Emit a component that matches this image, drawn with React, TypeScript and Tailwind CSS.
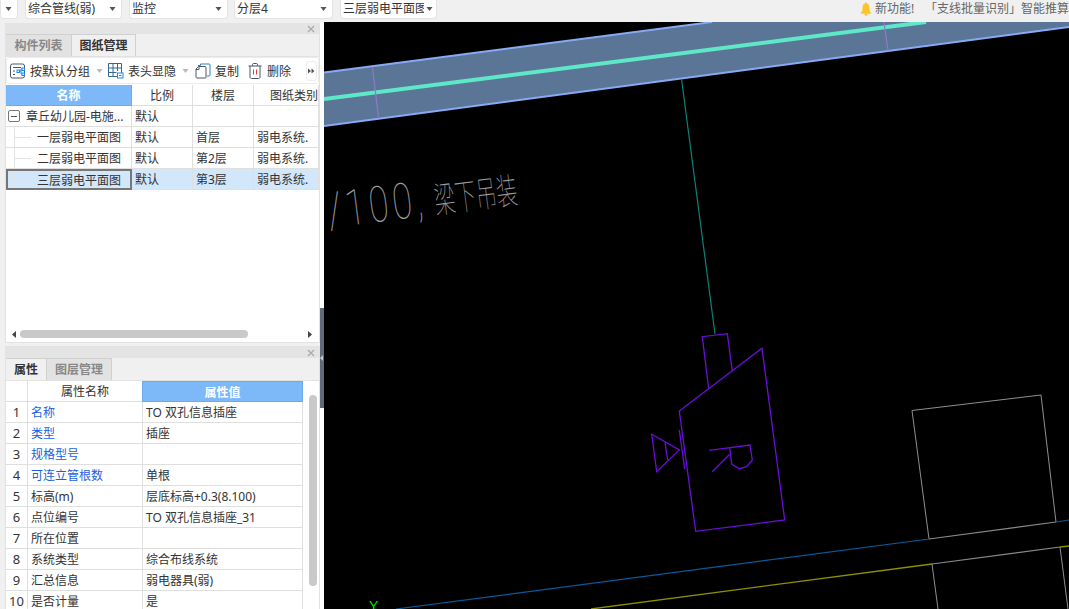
const FONT = 'font-["Noto_Sans","Noto_Sans_CJK_SC",sans-serif]';

function Caret({ className = "" }: { className?: string }) {
  return (
    <svg width="7" height="4" viewBox="0 0 7 4" className={`shrink-0 ${className}`}>
      <path d="M0.5 0h6L3.5 4z" fill="#555" />
    </svg>
  );
}

function Drop({ w, ml, label, tight }: { w: string; ml?: string; label?: string; tight?: boolean }) {
  return (
    <div className={`${w} ${ml ?? ""} h-[19px] bg-white rounded-b-[4px] border-b border-x border-[#e4e4e4] flex items-center pl-[2px] ${tight ? "pr-[3px]" : "pr-[5px]"} text-[12px] text-[#333] overflow-hidden shrink-0`}>
      <span className="flex-1 min-w-0 whitespace-nowrap overflow-hidden">{label}</span>
      <Caret className={tight ? "ml-[2px]" : ""} />
    </div>
  );
}

function TopBar() {
  return (
    <div className="h-[22px] shrink-0 bg-[#f0f0f0] flex items-start overflow-hidden">
      <Drop w="w-[18px]" />
      <Drop w="w-[97px]" ml="ml-[7px]" label="综合管线(弱)" />
      <Drop w="w-[99px]" ml="ml-[7px]" label="监控" />
      <Drop w="w-[99px]" ml="ml-[6px]" label="分层4" />
      <Drop w="w-[97px]" ml="ml-[7px]" label="三层弱电平面图" tight />
      <div className="flex-1" />
      <div className="w-[209px] shrink-0 flex items-center h-[17px] text-[12px] text-[#666] whitespace-nowrap overflow-hidden">
        <svg width="12" height="14" viewBox="0 0 14 16" className="shrink-0 mr-[3px]">
          <path d="M7 0.5c.8 0 1.2.6 1.2 1.2C10.5 2.4 11 4.500 11 7c0 2.800 1 4.400 2 5.500v1H1v-1C2 11.400 3 9.800 3 7c0-2.500.5-4.600 2.800-5.300C5.800 1.100 6.200.5 7 .5z" fill="#fcc32c" />
          <ellipse cx="7" cy="14.500" rx="2" ry="1.300" fill="#fcc32c" />
        </svg>
        <span className="w-[50px] shrink-0">新功能!</span>
        <span>「支线批量识别」智能推算</span>
      </div>
    </div>
  );
}

function CloseBar() {
  return (
    <div className="h-[11px] bg-[#e4e4e4] flex items-center justify-end pr-[4px] shrink-0">
      <svg width="8" height="8" viewBox="0 0 8 8">
        <path d="M1 1l6 6M7 1L1 7" stroke="#a8a8a8" strokeWidth="1.200" />
      </svg>
    </div>
  );
}

function Tabs({ items }: { items: { label: string; w: string; active?: boolean }[] }) {
  return (
    <div className="h-[23px] bg-[#f0f0f0] flex border-b border-[#e2e2e2] shrink-0">
      {items.map((t) => (
        <div
          key={t.label}
          className={`${t.w} flex items-center justify-center text-[12px] border-r border-t border-[#d0d0d0] ${
            t.active ? "bg-[#f0f0f0] text-[#333] font-bold" : "bg-[#e2e2e2] text-[#888] font-bold"
          }`}
        >
          {t.label}
        </div>
      ))}
    </div>
  );
}

function GroupIcon() {
  return (
    <svg width="16" height="16" viewBox="0 0 16 16" className="shrink-0">
      <rect x="0.500" y="1" width="14" height="14" rx="2" fill="none" stroke="#4a5568" />
      <path d="M3 4.500h8M3 11.500h2M3 8h2" stroke="#4a5568" />
      <rect x="7" y="7" width="2.500" height="2.500" fill="none" stroke="#1e88e5" />
      <rect x="12" y="5" width="2.500" height="2.500" fill="#fff" stroke="#1e88e5" />
      <rect x="12" y="10" width="2.500" height="2.500" fill="#fff" stroke="#1e88e5" />
      <path d="M9.500 8H11V6h1M11 8v3h1" fill="none" stroke="#1e88e5" />
    </svg>
  );
}

function TableIcon() {
  return (
    <svg width="16" height="16" viewBox="0 0 16 16" className="shrink-0">
      <path d="M.5.500h13v13H.5zM.5 5h13M.5 9.500h8M5 .500v13M9.500.500V8" fill="none" stroke="#33669c" />
      <rect x="9.500" y="10" width="5.500" height="5" fill="#fff" stroke="#1e88e5" />
      <path d="M11 12.500h2.500" stroke="#1e88e5" />
    </svg>
  );
}

function CopyIcon() {
  return (
    <svg width="16" height="16" viewBox="0 0 16 16" className="shrink-0">
      <path d="M3 2.500h2.500V1h8.500c.6 0 1 .4 1 1v10c0 .6-.4 1-1 1h-2" fill="none" stroke="#2f7fc4" />
      <path d="M3.500 3.500H10c.6 0 1 .4 1 1v10c0 .3-.2.500-.5.500H2c-.6 0-1-.4-1-1V6z" fill="#fff" stroke="#4a5568" />
      <path d="M4 3.500V6.500H1" fill="none" stroke="#4a5568" />
    </svg>
  );
}

function TrashIcon() {
  return (
    <svg width="14" height="16" viewBox="0 0 14 16" className="shrink-0">
      <path d="M.5 3h13M4.500 3V1.500c0-.5.4-1 1-1h3c.6 0 1 .5 1 1V3" fill="none" stroke="#4a5568" />
      <path d="M2 3v11c0 .8.600 1.500 1.500 1.500h7c.9 0 1.500-.7 1.500-1.500V3" fill="none" stroke="#4a5568" />
      <path d="M5.500 6.500v5M8.500 6.500v5" stroke="#e53935" />
    </svg>
  );
}

function Toolbar() {
  return (
    <div className="h-[27px] bg-white rounded-[3px] border border-[#ececec] flex items-center pl-[3px] text-[12px] text-[#333] whitespace-nowrap shrink-0">
      <GroupIcon />
      <span className="ml-[4px] pt-[2px]">按默认分组</span>
      <Caret className="ml-[6px] opacity-40" />
      <span className="ml-[5px] flex"><TableIcon /></span>
      <span className="ml-[4px] pt-[2px]">表头显隐</span>
      <Caret className="ml-[6px] opacity-40" />
      <span className="ml-[6px] flex"><CopyIcon /></span>
      <span className="ml-[4px] pt-[2px]">复制</span>
      <span className="ml-[9px] flex"><TrashIcon /></span>
      <span className="ml-[5px] pt-[2px]">删除</span>
      <div className="ml-[15px] w-[11px] h-[20px] border border-[#ececec] rounded-[3px] flex items-center justify-center">
        <svg width="7" height="6" viewBox="0 0 7 6">
          <path d="M0 .5l3 2.500L0 5.500zM3.500 .5l3 2.500-3 2.500z" fill="#555" />
        </svg>
      </div>
    </div>
  );
}

const cell = "h-[21px] border-r border-b border-[#dfdfdf] flex items-center px-[3px] pt-[2px] whitespace-nowrap overflow-hidden";

function TreeName({ label, selected }: { label: string; selected?: boolean }) {
  return (
    <div className={`h-[21px] flex items-center whitespace-nowrap overflow-hidden ${selected ? "border-2 border-[#767676]" : "border-r border-b border-[#dfdfdf]"}`}>
      <div className={`${selected ? "ml-[6px]" : "ml-[8px]"} h-full w-[23px] shrink-0 border-l border-[#e4e4e4] flex items-center`}>
        <div className="w-[16px] h-px bg-[#e4e4e4]" />
      </div>
      <span className="pt-[2px]">{label}</span>
    </div>
  );
}

function DrawingTable() {
  const rows = [
    ["一层弱电平面图", "默认", "首层", "弱电系统."],
    ["二层弱电平面图", "默认", "第2层", "弱电系统."],
    ["三层弱电平面图", "默认", "第3层", "弱电系统."],
  ];
  return (
    <div className="mt-px grid grid-cols-[126px_61px_61px_65px] text-[12px] text-[#333] auto-rows-[21px]">
      <div className="h-[21px] bg-[#7db8f8] text-white font-bold flex items-center justify-center pt-[2px] border-r border-b border-[#6fa9e8]">名称</div>
      <div className={`${cell} justify-center`}>比例</div>
      <div className={`${cell} justify-center`}>楼层</div>
      <div className={`${cell} justify-end pr-0`}>图纸类别</div>

      <div className="h-[21px] flex items-center border-r border-b border-[#dfdfdf] whitespace-nowrap overflow-hidden">
        <div className="ml-[2px] w-[12px] h-[12px] border border-[#777] rounded-[2px] flex items-center justify-center shrink-0">
          <div className="w-[6px] h-px bg-[#555]" />
        </div>
        <span className="ml-[6px] pt-[2px]">章丘幼儿园-电施...</span>
      </div>
      <div className={cell}>默认</div>
      <div className={cell} />
      <div className={cell} />

      {rows.map((r, i) => {
        const sel = i === 2;
        const bg = sel ? "bg-[#d3e7fb]" : "";
        return [
          <div key={r[0]} className={bg}><TreeName label={r[0]} selected={sel} /></div>,
          <div key={r[0] + "a"} className={`${cell} ${bg}`}>{r[1]}</div>,
          <div key={r[0] + "b"} className={`${cell} ${bg}`}>{r[2]}</div>,
          <div key={r[0] + "c"} className={`${cell} ${bg}`}>{r[3]}</div>,
        ];
      })}
    </div>
  );
}

function HScroll() {
  return (
    <div className="h-[12px] flex items-center mb-[2px] shrink-0">
      <svg width="4" height="7" viewBox="0 0 4 7" className="ml-[6px]"><path d="M4 0v7L0 3.500z" fill="#444" /></svg>
      <div className="ml-[4px] w-[228px] h-[8px] rounded-full bg-[#c9c9c9]" />
      <div className="flex-1" />
      <svg width="4" height="7" viewBox="0 0 4 7" className="mr-[7px]"><path d="M0 0v7l4-3.500z" fill="#444" /></svg>
    </div>
  );
}

const props: [string, string, boolean][] = [
  ["名称", "TO 双孔信息插座", true],
  ["类型", "插座", true],
  ["规格型号", "", true],
  ["可连立管根数", "单根", true],
  ["标高(m)", "层底标高+0.3(8.100)", false],
  ["点位编号", "TO 双孔信息插座_31", false],
  ["所在位置", "", false],
  ["系统类型", "综合布线系统", false],
  ["汇总信息", "弱电器具(弱)", false],
  ["是否计量", "是", false],
];

function PropTable() {
  return (
    <div className="flex flex-1 overflow-hidden">
      <div className="w-[297px] shrink-0 grid grid-cols-[22px_115px_160px] auto-rows-[21px] text-[12px] text-[#333]">
        <div className={cell} />
        <div className={`${cell} justify-center`}>属性名称</div>
        <div className="-ml-px bg-[#7db8f8] text-white font-bold flex items-center justify-center pt-[2px] border border-[#6fa9e8]">属性值</div>
        {props.map(([k, v, blue], i) => [
          <div key={k + "n"} className={`${cell} justify-center px-0 text-[13px]`}>{i + 1}</div>,
          <div key={k} className={`${cell} ${blue ? "text-[#1a5fe0]" : ""}`}>{k}</div>,
          <div key={k + "v"} className={cell}>{v}</div>,
        ])}
      </div>
      <div className="flex-1 pt-[14px] pl-[6px]">
        <div className="w-[8px] h-[191px] rounded-full bg-[#c9c9c9]" />
      </div>
    </div>
  );
}

function LeftPanel() {
  return (
    <div className="w-[315px] ml-[5px] shrink-0 flex flex-col h-full">
      <div className="h-[320px] mt-px border-b border-x border-[#e2e2e2] bg-white flex flex-col shrink-0">
        <CloseBar />
        <Tabs items={[{ label: "构件列表", w: "w-[66px]" }, { label: "图纸管理", w: "w-[64px]", active: true }]} />
        <Toolbar />
        <DrawingTable />
        <div className="flex-1" />
        <HScroll />
      </div>
      <div className="flex-1 mt-[3px] border-x border-t border-[#e2e2e2] bg-white flex flex-col overflow-hidden">
        <CloseBar />
        <Tabs items={[{ label: "属性", w: "w-[41px]", active: true }, { label: "图层管理", w: "w-[65px]" }]} />
        <PropTable />
      </div>
    </div>
  );
}

function Handle() {
  return (
    <div className="w-[4px] shrink-0 h-full bg-white flex flex-col">
      <div className="h-[286px] shrink-0" />
      <div className="h-[100px] shrink-0 bg-[#5f6b78] flex items-center">
        <svg width="3" height="6" viewBox="0 0 3 6"><path d="M3 0v6L0 3z" fill="#c4c9ce" /></svg>
      </div>
    </div>
  );
}

function Canvas() {
  return (
    <div className="flex-1 bg-black overflow-hidden">
      <svg viewBox="324 22 745 587" className="block w-full h-full">
        <polygon points="324,72.500 712,22 1069,-24 1069,27 324,126" fill="#5b7597" />
        <path d="M324 72.500L712 22" stroke="#86aaf5" strokeWidth="2" fill="none" />
        <path d="M324 126L1069 27" stroke="#86aaf5" strokeWidth="2" fill="none" />
        <path d="M324 99L926 22" stroke="#5fe8c8" strokeWidth="4" fill="none" />
        <path d="M372.500 68L378.500 117M884 22L888 51" stroke="#9078cc" strokeWidth="1.200" fill="none" />
        <path d="M681.500 79L715 334" stroke="#0b8376" strokeWidth="1.200" fill="none" />

        <g fill="none" stroke="#6a0fd8" strokeWidth="1.300">
          <path d="M708.700 389L702.300 336.700L727.300 333.700L732.300 370.700" />
          <path d="M679.300 411L762 348.300L784.700 520L695.700 531.300Z" />
          <path d="M651.700 434.300L679.300 450L656.700 471.700Z" />
          <path d="M665 442.300L667.700 460" />
          <path d="M679.300 430L684.700 469" />
          <path d="M709.300 450.300L750 445L752.300 460L746.700 466.700L739.300 468.700L731.700 464L729.700 447.700" />
          <path d="M729.700 454.300L712.300 471.700" />
        </g>

        <path d="M912 410.500L1041 395L1056 522M912 410.500L929 539" fill="none" stroke="#8f8f8f" strokeWidth="1" />
        <path d="M396 609L929 539" stroke="#0a5a9a" strokeWidth="1.200" fill="none" />
        <path d="M929 539L1056 522" stroke="#8a8a8a" strokeWidth="1.200" fill="none" />
        <path d="M1056 522L1069 520" stroke="#0a5a9a" strokeWidth="1.200" fill="none" />
        <path d="M591 609L932 564" stroke="#8f8f00" strokeWidth="1.300" fill="none" />
        <path d="M932 564L1060 547" stroke="#8a8a8a" strokeWidth="1.200" fill="none" />
        <path d="M1060 547L1069 546" stroke="#8f8f00" strokeWidth="1.300" fill="none" />
        <path d="M932 564L938 609M1060 547L1068 609" stroke="#8f8f8f" strokeWidth="1" fill="none" />

        <g transform="translate(330 228) rotate(-7.300)" fill="#9c9c9c">
          <text transform="scale(0.72 1)" fontSize="50" fontWeight="100" fontFamily="Roboto, 'Liberation Sans', sans-serif" letterSpacing="5.500">/100,</text>
          <text transform="translate(107 -1) scale(0.58 1)" fontSize="36" fontWeight="100" fontFamily="'Noto Sans CJK SC', sans-serif">梁下吊装</text>
        </g>
        <text x="369" y="611" fontSize="14" fill="#00e000" fontFamily="'Liberation Sans', sans-serif">Y</text>
      </svg>
    </div>
  );
}

export default function App() {
  return (
    <div className={`w-[1069px] h-[609px] overflow-hidden flex flex-col bg-[#f0f0f0] ${FONT}`}>
      <TopBar />
      <div className="flex flex-1 min-h-0">
        <LeftPanel />
        <Handle />
        <Canvas />
      </div>
    </div>
  );
}
